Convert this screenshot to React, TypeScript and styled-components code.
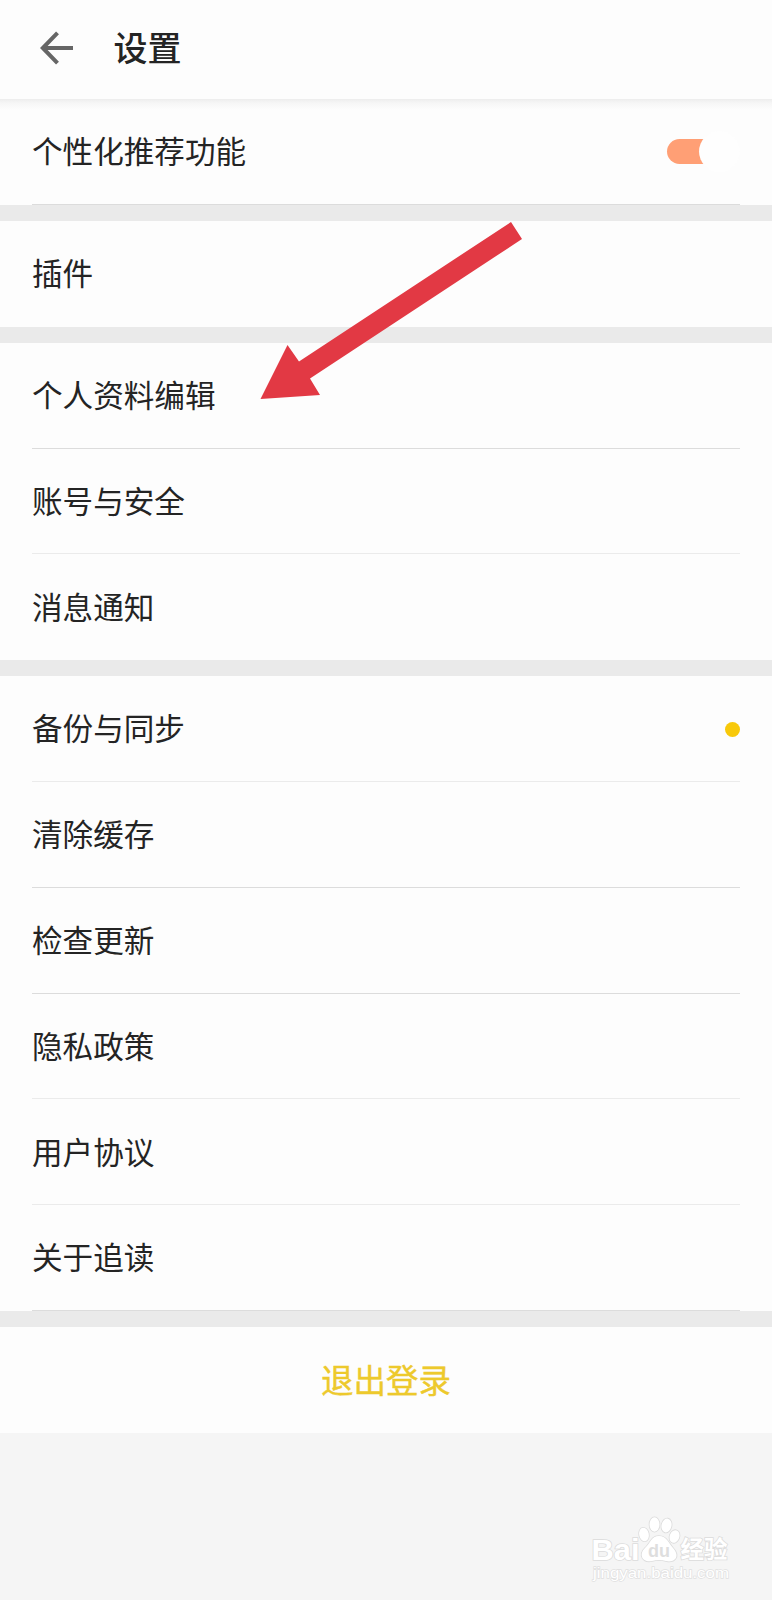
import React from 'react';
import styled, { createGlobalStyle } from 'styled-components';

const GlobalStyle = createGlobalStyle`
  *, *::before, *::after { box-sizing: border-box; }
  body {
    margin: 0;
    background: #f5f5f5;
    color: #242424;
    font-family: "Noto Sans CJK SC", "Noto Sans", sans-serif;
  }
`;

const Screen = styled.main`
  position: relative;
  display: flex;
  flex-direction: column;
  width: 772px;
  height: 1600px;
  overflow: hidden;
  background: #f5f5f5;
`;

const Header = styled.header`
  display: flex;
  align-items: center;
  flex: none;
  gap: 40.6px;
  height: 99px;
  padding: 0 0 3px 40px;
  background: #fdfdfd;
`;

const BackIcon = styled.svg`
  width: 33px;
  height: 34px;
  fill: none;
  stroke: #666;
  stroke-width: 4;
`;

const Title = styled.h1`
  margin: 0;
  padding-bottom: 2px;
  font-size: 34px;
  font-weight: 500;
  line-height: 50px;
`;

const Settings = styled.div`
  display: flex;
  flex-direction: column;
  gap: 16.2px;
  background: #eaeaea;
`;

const Section = styled.section<{ $shaded?: boolean }>`
  background: ${({ $shaded }) =>
    $shaded ? 'linear-gradient(#ededed 0, #f6f6f6 4px, #fdfdfd 11px)' : '#fdfdfd'};
`;

type Line = 'dark' | 'light';

const lineColors: Record<Line, string> = { dark: '#dcdcdc', light: '#ebebeb' };

const Row = styled.div<{ $line?: Line }>`
  display: flex;
  align-items: center;
  justify-content: space-between;
  height: 105.77px;
  margin: 0 32px;
  border-bottom: 1px solid ${({ $line }) => ($line ? lineColors[$line] : 'transparent')};
`;

const Label = styled.span`
  padding-bottom: 2.6px;
  font-size: 30.6px;
  line-height: 44px;
`;

const Switch = styled.span`
  display: flex;
  align-items: center;
  justify-content: flex-end;
  width: 73px;
  height: 25px;
  margin-top: 1px;
  border-radius: 13px;
  background: linear-gradient(90deg, #ff9f75 50px, transparent 50px);
`;

const Thumb = styled.span`
  flex: none;
  width: 41px;
  height: 41px;
  border-radius: 50%;
  background: #fefefe;
`;

const Dot = styled.span`
  width: 15px;
  height: 15px;
  margin-top: 1px;
  border-radius: 50%;
  background: #f8c90a;
`;

const Logout = styled.button`
  height: 106px;
  padding: 0 0 3px;
  border: 0;
  background: #fdfdfd;
  color: #edc92c;
  font: 400 32.5px/48px "Noto Sans CJK SC", sans-serif;
  -webkit-text-stroke: 0.4px #edc92c;
`;

const Pointer = styled.svg`
  position: absolute;
  left: 260px;
  top: 221px;
  width: 263px;
  height: 179px;
  fill: #e23944;
`;

const Watermark = styled.svg`
  position: absolute;
  left: 588px;
  top: 1512px;
  width: 150px;
  height: 74px;
  fill: #fff;
  stroke: #dcdcdc;
  stroke-width: 1.6;
  paint-order: stroke;
`;

const SiteAddress = styled.text`
  font: 15.5px "Liberation Sans", sans-serif;
  stroke: #e0e0e0;
  stroke-width: 1.3;
`;

type Item = { name: string; control?: 'switch' | 'dot'; line?: Line };

const sections: Item[][] = [
  [{ name: '个性化推荐功能', control: 'switch', line: 'dark' }],
  [{ name: '插件' }],
  [{ name: '个人资料编辑', line: 'dark' }, { name: '账号与安全', line: 'light' }, { name: '消息通知' }],
  [
    { name: '备份与同步', control: 'dot', line: 'light' },
    { name: '清除缓存', line: 'dark' },
    { name: '检查更新', line: 'dark' },
    { name: '隐私政策', line: 'light' },
    { name: '用户协议', line: 'light' },
    { name: '关于追读', line: 'dark' },
  ],
];

export default function App() {
  return (
    <>
      <GlobalStyle />
      <Screen>
        <Header>
          <BackIcon viewBox="0 0 33 34">
            <path d="M17.5 1.8 2.8 17 17.5 32.2M3 17H33" />
          </BackIcon>
          <Title>设置</Title>
        </Header>
        <Settings>
          {sections.map((items, index) => (
            <Section key={index} $shaded={index === 0}>
              {items.map((item) => (
                <Row key={item.name} $line={item.line}>
                  <Label>{item.name}</Label>
                  {item.control === 'switch' && (
                    <Switch>
                      <Thumb />
                    </Switch>
                  )}
                  {item.control === 'dot' && <Dot />}
                </Row>
              ))}
            </Section>
          ))}
          <Logout>退出登录</Logout>
        </Settings>
        <Pointer viewBox="0 0 263 179">
          <path d="M251 1 262 18 50 157.500 60 174 .5 178 27.500 124 39 140.500Z" />
        </Pointer>
        <Watermark viewBox="0 0 150 74">
          <text x="3.500" y="48" fontFamily="Liberation Sans" fontWeight="700" fontSize="30" textLength="48" lengthAdjust="spacingAndGlyphs">Bai</text>
          <ellipse cx="56" cy="22.500" rx="4.800" ry="6.800" transform="rotate(-12 56 22.5)" />
          <ellipse cx="66.500" cy="12.500" rx="5" ry="7.200" />
          <ellipse cx="78.500" cy="13.500" rx="5" ry="7" transform="rotate(12 78.5 13.5)" />
          <ellipse cx="86.500" cy="24.500" rx="4.800" ry="6.500" transform="rotate(20 86.5 24.5)" />
          <path d="M71 24C79 24 81 32 85 36C93 45 86 51 78 49C73 47.500 69 47.500 64 49C55 51 50 43 57 36C62 32 63 24 71 24Z" />
          <text x="60" y="45" fontFamily="Liberation Sans" fontWeight="700" fontSize="19" fill="#dedede" stroke="none" textLength="22" lengthAdjust="spacingAndGlyphs">du</text>
          <text x="92.500" y="46" fontFamily="Noto Sans CJK SC" fontWeight="700" fontSize="23.500">经验</text>
          <SiteAddress x="5" y="66" textLength="136" lengthAdjust="spacingAndGlyphs">jingyan.baidu.com</SiteAddress>
        </Watermark>
      </Screen>
    </>
  );
}
